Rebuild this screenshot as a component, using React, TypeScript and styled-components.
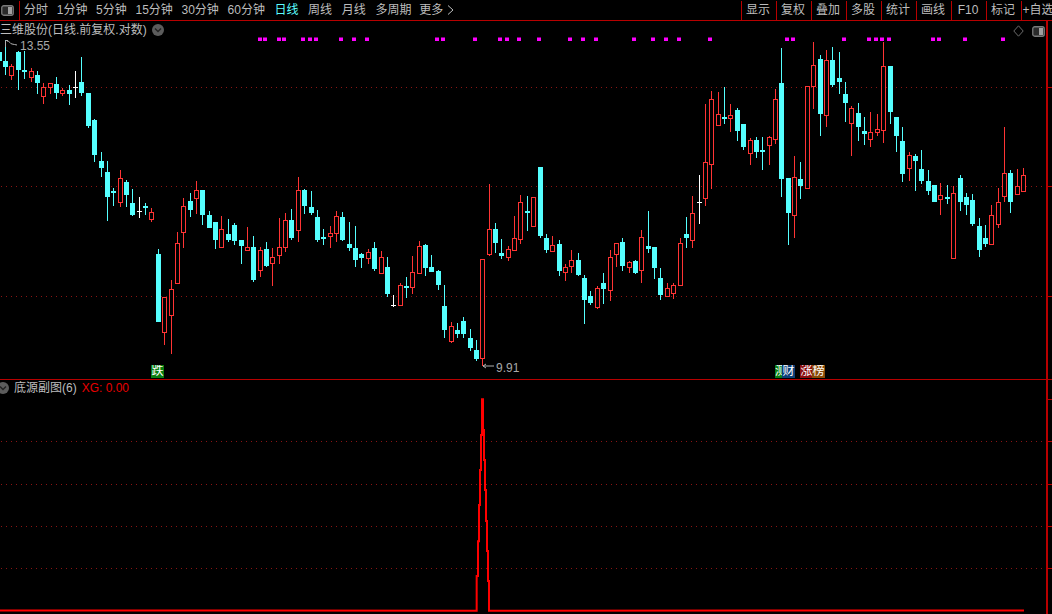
import React from "react";
import styled, { createGlobalStyle } from "styled-components";

const GlobalStyle = createGlobalStyle`
  html, body { margin: 0; padding: 0; background: #000; overflow: hidden; }
  #root { width: 1052px; height: 614px; overflow: hidden; }
`;

const FONT = `"Liberation Sans", "Noto Sans CJK SC", sans-serif`;
const LINE = "#b80000";
const TEXT = "#bdbdbd";

const Page = styled.div`
  width: 1052px;
  height: 614px;
  background: #000;
  display: flex;
  flex-direction: column;
  font: 12px/1 ${FONT};
  color: ${TEXT};
  overflow: hidden;
`;

const Toolbar = styled.header`
  height: 20px;
  flex: none;
  display: flex;
  align-items: stretch;
  border-bottom: 1px solid ${LINE};
  line-height: 20px;
  white-space: nowrap;
`;

const PanelToggle = styled.div`
  width: 20px;
  display: flex;
  align-items: center;
  padding-left: 1px;
  box-sizing: border-box;
  border-right: 1px solid ${LINE};
  margin-top: 1px;
  height: 19px;
`;

const TabRow = styled.nav<{ $gap: number; $offset: number }>`
  display: flex;
  gap: ${(p) => p.$gap}px;
  margin-left: ${(p) => p.$offset}px;
`;

const Tab = styled.span<{ $active?: boolean }>`
  color: ${(p) => (p.$active ? "#5cffff" : TEXT)};
`;

const MoreTab = styled.span`
  display: flex;
  align-items: center;
  gap: 4px;
  margin-left: -2px;
`;

const ToolGroup = styled.div`
  margin-left: auto;
  display: flex;
  width: 311px;
  flex: none;
`;

const ToolButton = styled.span`
  width: 35px;
  flex: none;
  box-sizing: border-box;
  height: 19px;
  margin-top: 1px;
  line-height: 19px;
  border-left: 1px solid ${LINE};
  padding-right: 2px;
  text-align: center;
  white-space: nowrap;
`;

const Pane = styled.section<{ $height: number; $divided?: boolean }>`
  height: ${(p) => p.$height}px;
  flex: none;
  display: flex;
  ${(p) => (p.$divided ? `border-bottom: 1px solid ${LINE};` : "")}
`;

const Plot = styled.div`
  position: relative;
  width: 1046px;
  flex: none;
  overflow: hidden;
`;

const ChartSvg = styled.svg`
  display: block;
  width: 1046px;
  height: 100%;
`;

const Scale = styled.div`
  flex: 1;
  box-sizing: border-box;
  border-left: 2px solid ${LINE};
`;

const ScaleSvg = styled.svg`
  display: block;
  width: 100%;
  height: 100%;
`;

const PaneHeader = styled.div<{ $top: number }>`
  position: absolute;
  left: 0;
  top: ${(p) => p.$top}px;
  display: flex;
  align-items: center;
  height: 12px;
  white-space: nowrap;
`;

const Title = styled.span<{ $left?: number }>`
  margin-left: ${(p) => p.$left ?? 0}px;
`;

const Formula = styled.span`
  margin-left: 5px;
  color: #e80000;
`;

const DropBadge = styled.span<{ $left: number }>`
  width: 12px;
  height: 12px;
  border-radius: 50%;
  background: #5c5c5c;
  margin-left: ${(p) => p.$left}px;
  flex: none;
  display: flex;
  align-items: center;
  justify-content: center;
`;

const CornerIcons = styled.div`
  position: absolute;
  top: 4px;
  left: 1013px;
  display: flex;
  align-items: center;
  gap: 8px;
`;

const PriceNote = styled.span<{ $x: number; $y: number }>`
  position: absolute;
  left: ${(p) => p.$x}px;
  top: ${(p) => p.$y}px;
  color: #a8a8a8;
  line-height: 12px;
`;

const SignalTag = styled.span<{ $x: number; $bg: string; $clip?: number }>`
  position: absolute;
  left: ${(p) => p.$x}px;
  top: 344px;
  width: ${(p) => p.$clip ?? 13}px;
  height: 13px;
  background: ${(p) => p.$bg};
  color: #fff;
  line-height: 13px;
  text-align: ${(p) => (p.$clip ? "left" : "center")};
  overflow: hidden;
`;

type Candle = [number, number, number, number, number, "c" | "r" | "w"];

const candles: Candle[] = [
  [-0.5, 52, 61, 50, 70, "c"], [5.5, 61, 67, 40, 75, "c"], [11.5, 66, 75, 64, 80, "r"], [18.5, 52, 70, 51, 90, "c"],
  [24.5, 70, 72, 51, 79, "c"], [31.5, 71, 77, 68, 82, "r"], [37.5, 75, 83, 71, 94, "c"], [43.5, 87, 96, 83, 104, "r"],
  [50.5, 83, 87, 83, 94, "r"], [56.5, 84, 93, 77, 99, "c"], [62.5, 90, 93, 88, 96, "r"], [69.5, 90, 94, 85, 105, "c"],
  [75.5, 87, 87, 71, 98, "w"], [81.5, 82, 93, 57, 96, "c"], [88.5, 93, 126, 93, 128, "c"], [94.5, 120, 155, 119, 162, "c"],
  [101.5, 161, 168, 152, 177, "c"], [107.5, 172, 197, 161, 221, "c"], [113.5, 191, 193, 188, 206, "c"], [120.5, 178, 202, 170, 207, "r"],
  [126.5, 182, 195, 180, 207, "c"], [132.5, 203, 215, 189, 216, "c"], [139.5, 211, 211, 197, 218, "w"], [145.5, 206, 208, 203, 215, "c"],
  [151.5, 212, 219, 208, 222, "r"], [158.5, 254, 322, 249, 322, "c"], [164.5, 297, 332, 297, 345, "r"], [171.5, 289, 315, 280, 354, "r"],
  [177.5, 243, 283, 232, 283, "r"], [183.5, 206, 232, 198, 248, "r"], [190.5, 201, 210, 193, 217, "c"], [196.5, 190, 198, 181, 214, "r"],
  [202.5, 190, 215, 190, 225, "c"], [209.5, 215, 228, 211, 228, "c"], [215.5, 222, 240, 222, 249, "c"], [221.5, 229, 247, 216, 247, "r"],
  [228.5, 234, 240, 219, 242, "c"], [234.5, 225, 241, 223, 245, "c"], [241.5, 240, 246, 240, 264, "c"], [247.5, 247, 250, 227, 250, "r"],
  [253.5, 247, 280, 236, 282, "c"], [260.5, 250, 270, 247, 277, "r"], [266.5, 249, 266, 242, 267, "c"], [272.5, 257, 263, 248, 286, "r"],
  [279.5, 247, 255, 218, 264, "r"], [285.5, 220, 247, 213, 252, "r"], [291.5, 220, 238, 209, 240, "c"], [298.5, 190, 230, 177, 242, "r"],
  [304.5, 190, 206, 189, 214, "c"], [311.5, 207, 213, 191, 215, "c"], [317.5, 217, 240, 210, 242, "c"], [323.5, 237, 238, 229, 245, "c"],
  [330.5, 233, 236, 226, 248, "r"], [336.5, 216, 233, 211, 242, "r"], [342.5, 217, 240, 212, 241, "c"], [349.5, 244, 248, 222, 251, "c"],
  [355.5, 248, 260, 226, 267, "c"], [361.5, 254, 258, 253, 268, "c"], [368.5, 252, 258, 249, 264, "r"], [374.5, 248, 269, 242, 271, "c"],
  [381.5, 257, 273, 251, 273, "r"], [387.5, 267, 294, 257, 297, "c"], [393.5, 305, 305, 295, 307, "w"], [400.5, 285, 305, 283, 305, "r"],
  [406.5, 286, 287, 277, 298, "c"], [412.5, 272, 287, 256, 294, "r"], [419.5, 246, 273, 241, 274, "r"], [425.5, 245, 268, 244, 276, "c"],
  [431.5, 267, 272, 255, 272, "c"], [438.5, 271, 285, 270, 290, "c"], [444.5, 306, 330, 285, 338, "c"], [451.5, 326, 341, 322, 343, "r"],
  [457.5, 330, 334, 323, 338, "c"], [463.5, 321, 334, 317, 338, "c"], [470.5, 338, 348, 329, 351, "c"], [476.5, 350, 359, 340, 361, "c"],
  [482.5, 259, 358, 259, 366, "r"], [489.5, 229, 254, 184, 256, "r"], [495.5, 229, 243, 223, 253, "c"], [501.5, 253, 256, 239, 259, "c"],
  [508.5, 249, 257, 246, 261, "r"], [514.5, 238, 250, 216, 250, "r"], [520.5, 202, 239, 195, 244, "r"], [527.5, 211, 213, 196, 231, "c"],
  [533.5, 197, 226, 197, 226, "r"], [540.5, 167, 236, 167, 238, "c"], [546.5, 238, 250, 234, 253, "c"], [552.5, 245, 251, 236, 252, "r"],
  [559.5, 244, 271, 240, 276, "c"], [565.5, 267, 272, 264, 281, "r"], [571.5, 260, 266, 250, 273, "r"], [578.5, 260, 275, 253, 276, "c"],
  [584.5, 278, 300, 275, 324, "c"], [590.5, 296, 303, 291, 305, "c"], [597.5, 288, 307, 286, 309, "r"], [603.5, 283, 289, 273, 304, "c"],
  [610.5, 257, 290, 250, 301, "r"], [616.5, 243, 254, 243, 267, "r"], [622.5, 242, 266, 238, 271, "c"], [629.5, 262, 267, 261, 273, "r"],
  [635.5, 261, 273, 260, 274, "c"], [641.5, 237, 270, 230, 283, "r"], [648.5, 246, 249, 211, 253, "c"], [654.5, 247, 268, 247, 279, "c"],
  [660.5, 278, 295, 268, 300, "c"], [667.5, 288, 296, 283, 296, "r"], [673.5, 285, 293, 283, 299, "r"], [680.5, 243, 285, 238, 285, "r"],
  [686.5, 234, 238, 217, 248, "c"], [692.5, 213, 240, 196, 248, "r"], [699.5, 202, 202, 175, 224, "w"], [705.5, 162, 198, 104, 206, "r"],
  [711.5, 99, 164, 91, 189, "r"], [718.5, 114, 125, 92, 126, "r"], [724.5, 117, 118, 87, 124, "c"], [730.5, 115, 118, 104, 132, "r"],
  [737.5, 110, 131, 108, 141, "c"], [743.5, 124, 147, 124, 150, "c"], [750.5, 140, 153, 138, 165, "r"], [756.5, 140, 152, 137, 158, "c"],
  [762.5, 150, 152, 137, 170, "c"], [769.5, 137, 145, 136, 165, "r"], [775.5, 99, 139, 89, 144, "r"], [781.5, 83, 179, 48, 197, "c"],
  [788.5, 178, 213, 178, 245, "c"], [794.5, 177, 215, 156, 238, "r"], [800.5, 179, 186, 162, 199, "c"], [807.5, 86, 188, 86, 188, "r"],
  [813.5, 65, 86, 42, 109, "r"], [820.5, 59, 114, 55, 136, "c"], [826.5, 60, 115, 50, 127, "r"], [832.5, 60, 85, 47, 87, "c"],
  [839.5, 78, 82, 52, 94, "c"], [845.5, 94, 103, 82, 122, "c"], [851.5, 108, 123, 106, 156, "r"], [858.5, 113, 127, 103, 141, "c"],
  [864.5, 131, 134, 117, 145, "c"], [870.5, 132, 139, 112, 147, "r"], [877.5, 129, 132, 114, 136, "r"], [883.5, 66, 130, 42, 143, "r"],
  [890.5, 66, 112, 66, 124, "c"], [896.5, 117, 136, 117, 152, "c"], [902.5, 141, 174, 127, 182, "c"], [909.5, 155, 168, 152, 181, "r"],
  [915.5, 156, 161, 154, 191, "c"], [921.5, 169, 181, 150, 184, "c"], [928.5, 181, 191, 170, 195, "c"], [934.5, 185, 202, 185, 202, "c"],
  [940.5, 195, 199, 183, 215, "r"], [947.5, 197, 199, 185, 204, "c"], [953.5, 193, 258, 186, 258, "r"], [960.5, 178, 202, 175, 211, "c"],
  [966.5, 197, 205, 193, 215, "c"], [972.5, 200, 224, 194, 226, "c"], [979.5, 226, 250, 218, 257, "c"], [985.5, 238, 244, 225, 247, "c"],
  [991.5, 215, 244, 205, 244, "r"], [998.5, 202, 224, 188, 228, "r"], [1004.5, 173, 196, 127, 202, "r"], [1010.5, 173, 202, 170, 213, "c"],
  [1017.5, 186, 194, 169, 194, "r"], [1023.5, 175, 191, 168, 191, "r"],
];

const signalDots = [
  259.7, 265.3, 278.7, 284.3, 303.3, 310.3, 316.3, 341.3, 354.3, 367.3, 437.3, 443.3, 475.3, 500.3, 507.3, 519.3,
  539.3, 570.3, 583.3, 596.3, 634.3, 653.3, 666.3, 679.3, 710.3, 787.3, 793.3, 844.3, 869.3, 876.3, 882.3, 889.3,
  933.3, 939.3, 965.3, 1003.3,
];

const COLORS = { c: "#55ffff", r: "#ff3434", w: "#ffffff" };

const CandleMark = ({ d }: { d: Candle }) => {
  const [c, top, bottom, high, low, kind] = d;
  const left = Math.floor(c - 2.5);
  const mid = left + 2;
  const color = COLORS[kind];
  if (kind === "w") {
    return (
      <g fill={color}>
        <rect x={mid} y={high} width={1} height={low - high} />
        <rect x={mid - 2} y={top} width={5} height={1} />
      </g>
    );
  }
  if (kind === "c") {
    return (
      <g fill={color}>
        <rect x={mid} y={high} width={1} height={low - high} />
        <rect x={left} y={top} width={5} height={Math.max(bottom - top, 2)} />
      </g>
    );
  }
  return (
    <g>
      <rect x={mid} y={high} width={1} height={top - high} fill={color} />
      <rect x={mid} y={bottom} width={1} height={low - bottom} fill={color} />
      <rect x={left + 0.5} y={top + 0.5} width={4} height={bottom - top} fill="#000" stroke={color} strokeWidth={1} />
    </g>
  );
};

const Dotted = ({ y }: { y: number }) => (
  <line x1={1} x2={1046} y1={y + 0.5} y2={y + 0.5} stroke="#8a1414" strokeWidth={1} strokeDasharray="1 4" shapeRendering="crispEdges" />
);

const Chevron = ({ color = "#222" }: { color?: string }) => (
  <svg width="8" height="6" viewBox="0 0 8 6">
    <path d="M1 1.5 L4 4.5 L7 1.5" fill="none" stroke={color} strokeWidth="1.4" />
  </svg>
);

const ToggleGlyph = () => (
  <svg width="13" height="11" viewBox="0 0 13 11">
    <rect x="0.75" y="0.75" width="11.5" height="9.5" rx="2" fill="#2a2a2a" stroke="#7a7a7a" strokeWidth="1.3" />
    <rect x="7" y="2" width="4" height="7" fill="#a0a0a0" />
  </svg>
);

const tabs = ["分时", "1分钟", "5分钟", "15分钟", "30分钟", "60分钟"];
const cycleTabs = ["周线", "月线", "多周期"];
const tools = ["显示", "复权", "叠加", "多股", "统计", "画线", "F10", "标记", "+自选"];

const peakLeft = [110, 114, 117, 120, 123, 126];
const peakLeftY = [782, 678, 574, 465, 360, 255, 148];
const peakRight = [129, 132, 135, 138, 141, 144, 147];
const peakRightY = [148, 240, 330, 420, 513, 603, 693, 782];
const px = (v: number) => 440 + v / 3;
const py = (v: number) => 350 + v / 3;
const peakPoints = [
  [0, 610.5],
  ...peakLeft.flatMap((x, i) => [[px(x), py(peakLeftY[i])], [px(x), py(peakLeftY[i + 1])]]),
  ...peakRight.flatMap((x, i) => [[px(x), py(peakRightY[i])], [px(x), py(peakRightY[i + 1])]]),
  [1024, 610.5],
]
  .map((p) => p.join(","))
  .join(" ");

export default function App() {
  return (
    <Page>
      <GlobalStyle />
      <Toolbar>
        <PanelToggle>
          <ToggleGlyph />
        </PanelToggle>
        <TabRow $gap={8.7} $offset={4}>
          {tabs.map((t) => (
            <Tab key={t}>{t}</Tab>
          ))}
        </TabRow>
        <TabRow $gap={9.7} $offset={9.5}>
          <Tab $active>日线</Tab>
          {cycleTabs.map((t) => (
            <Tab key={t}>{t}</Tab>
          ))}
          <MoreTab>
            更多
            <svg width="7" height="10" viewBox="0 0 7 10">
              <path d="M1 0.5 L6 5 L1 9.5" fill="none" stroke={TEXT} strokeWidth="1" />
            </svg>
          </MoreTab>
        </TabRow>
        <ToolGroup>
          {tools.map((t) => (
            <ToolButton key={t}>{t}</ToolButton>
          ))}
        </ToolGroup>
      </Toolbar>

      <Pane $height={358} $divided>
        <Plot>
          <ChartSvg viewBox="0 21 1046 358">
            {[87, 186, 296].map((y) => (
              <Dotted key={y} y={y} />
            ))}
            {signalDots.map((x) => (
              <rect key={x} x={Math.round(x) - 2} y={37.5} width={4} height={3.5} fill="#ff00ff" />
            ))}
            {candles.map((d) => (
              <CandleMark key={d[0]} d={d} />
            ))}
            <path d="M5.5 47 V40.5 H8 M7 41 C10 41 10 44 12 44 C14 44 15 45 17 45" fill="none" stroke="#b0b0b0" strokeWidth="1" />
            <path d="M483 366 H494 M483 366 L486 364 M483 366 L486 368" fill="none" stroke="#b0b0b0" strokeWidth="1" />
          </ChartSvg>
          <PaneHeader $top={3}>
            <Title>三维股份(日线.前复权.对数)</Title>
            <DropBadge $left={5}>
              <Chevron />
            </DropBadge>
          </PaneHeader>
          <CornerIcons>
            <svg width="11" height="12" viewBox="0 0 11 12">
              <path d="M5.5 0.8 L10.2 6 L5.5 11.2 L0.8 6 Z" fill="none" stroke="#6a6a6a" strokeWidth="1" />
            </svg>
            <ToggleGlyph />
          </CornerIcons>
          <PriceNote $x={20} $y={19}>13.55</PriceNote>
          <PriceNote $x={496} $y={341}>9.91</PriceNote>
          <SignalTag $x={151} $bg="#0a7d12">跌</SignalTag>
          <SignalTag $x={775} $bg="#0a7d12" $clip={7}>测</SignalTag>
          <SignalTag $x={782} $bg="#0d3f78">财</SignalTag>
          <SignalTag $x={800} $bg="#8a0f0f">涨</SignalTag>
          <SignalTag $x={812} $bg="#8a4a06">榜</SignalTag>
        </Plot>
        <Scale>
          <ScaleSvg viewBox="0 21 4 358" preserveAspectRatio="none">
            {[87, 186, 296].map((y) => (
              <rect key={y} x={0} y={y} width={4} height={1} fill={LINE} />
            ))}
          </ScaleSvg>
        </Scale>
      </Pane>

      <Pane $height={234}>
        <Plot>
          <ChartSvg viewBox="0 380 1046 234">
            {[441, 484, 526, 568].map((y) => (
              <Dotted key={y} y={y} />
            ))}
            <polyline points={peakPoints} fill="none" stroke="#ff0000" strokeWidth="2" strokeLinejoin="miter" />
          </ChartSvg>
          <PaneHeader $top={2}>
            <DropBadge $left={-3}>
              <Chevron />
            </DropBadge>
            <Title $left={5}>底源副图(6)</Title>
            <Formula>XG: 0.00</Formula>
          </PaneHeader>
        </Plot>
        <Scale>
          <ScaleSvg viewBox="0 380 4 234" preserveAspectRatio="none">
            {[399, 441, 484, 526, 568].map((y) => (
              <rect key={y} x={0} y={y} width={4} height={1} fill={LINE} />
            ))}
          </ScaleSvg>
        </Scale>
      </Pane>
    </Page>
  );
}
